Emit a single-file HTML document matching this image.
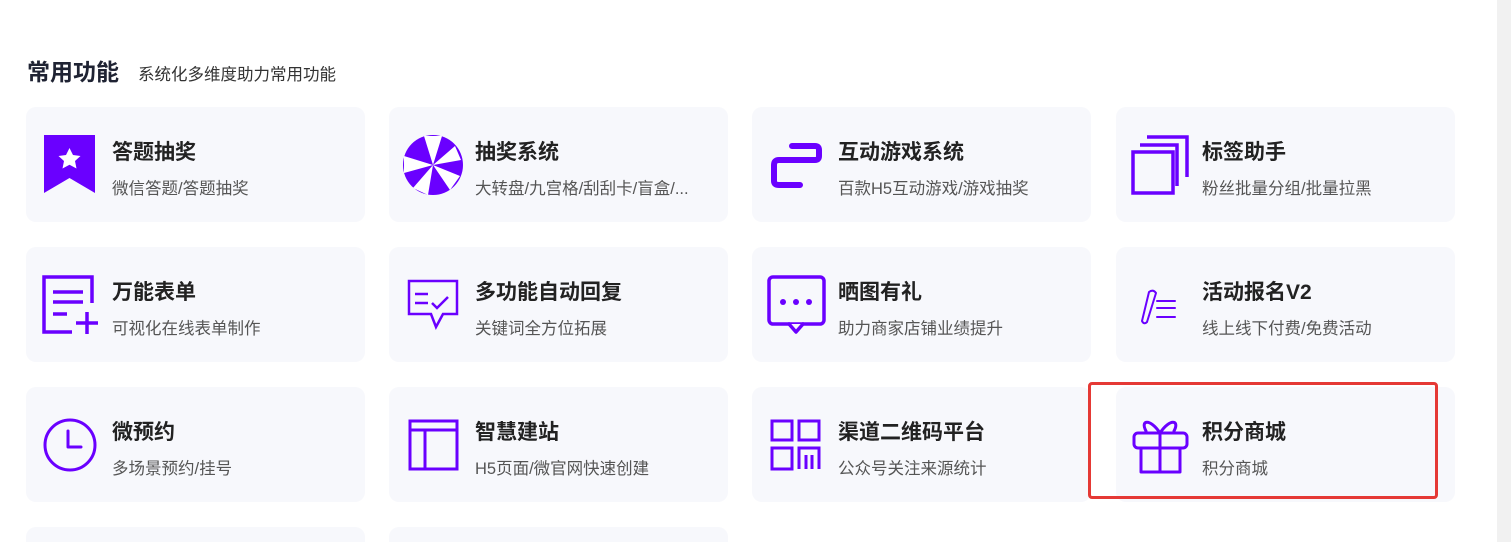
<!DOCTYPE html>
<html><head><meta charset="utf-8"><style>
html,body{margin:0;width:1511px;height:542px;overflow:hidden}
body{background:#fff;position:relative;font-family:"Liberation Sans","Noto Sans CJK SC",sans-serif}
.sb{position:absolute;left:1497px;top:0;width:14px;height:542px;background:#f1f1f1}
h1{position:absolute;left:27px;top:53px;margin:0;font-size:23px;font-weight:bold;color:#1f2333}
.st{position:absolute;left:138px;top:61px;font-size:16.5px;color:#333}
.c{position:absolute;width:339px;height:115px;background:#f7f8fc;border-radius:10px}
.t{position:absolute;left:86px;top:29px;font-size:21px;font-weight:bold;color:#222}
.s{position:absolute;left:86px;top:68px;font-size:16.5px;color:#555;white-space:nowrap}
.red{position:absolute;left:1088px;top:382px;width:344px;height:111px;border:3px solid #e53935;border-radius:4px}
svg.ic{position:absolute;left:0;top:0}
</style></head><body>
<div class="sb"></div>
<h1>常用功能</h1><div class="st">系统化多维度助力常用功能</div>

<div class="c" style="left:26px;top:107px"><div class="t">答题抽奖</div><div class="s">微信答题/答题抽奖</div></div>
<div class="c" style="left:389px;top:107px"><div class="t">抽奖系统</div><div class="s">大转盘/九宫格/刮刮卡/盲盒/...</div></div>
<div class="c" style="left:752px;top:107px"><div class="t">互动游戏系统</div><div class="s">百款H5互动游戏/游戏抽奖</div></div>
<div class="c" style="left:1116px;top:107px"><div class="t">标签助手</div><div class="s">粉丝批量分组/批量拉黑</div></div>
<div class="c" style="left:26px;top:247px"><div class="t">万能表单</div><div class="s">可视化在线表单制作</div></div>
<div class="c" style="left:389px;top:247px"><div class="t">多功能自动回复</div><div class="s">关键词全方位拓展</div></div>
<div class="c" style="left:752px;top:247px"><div class="t">晒图有礼</div><div class="s">助力商家店铺业绩提升</div></div>
<div class="c" style="left:1116px;top:247px"><div class="t">活动报名V2</div><div class="s">线上线下付费/免费活动</div></div>
<div class="c" style="left:26px;top:387px"><div class="t">微预约</div><div class="s">多场景预约/挂号</div></div>
<div class="c" style="left:389px;top:387px"><div class="t">智慧建站</div><div class="s">H5页面/微官网快速创建</div></div>
<div class="c" style="left:752px;top:387px"><div class="t">渠道二维码平台</div><div class="s">公众号关注来源统计</div></div>
<div class="c" style="left:1116px;top:387px"><div class="t">积分商城</div><div class="s">积分商城</div></div>
<div class="c" style="left:26px;top:527px;height:15px;border-radius:10px 10px 0 0"></div>
<div class="c" style="left:389px;top:527px;height:15px;border-radius:10px 10px 0 0"></div>

<svg class="ic" width="1511" height="542" viewBox="0 0 1511 542">
<g fill="#6a00ff">
<path d="M44 135H95V193L69.5 178L44 193Z"/>
<ellipse cx="433" cy="165" rx="30" ry="30"/>
<circle cx="783" cy="302" r="3"/><circle cx="796" cy="302" r="3"/><circle cx="809" cy="302" r="3"/>
</g>
<path d="M69.5 148l3.5 7 7.5 1-5.5 5 1.5 7.5-7-3.8-7 3.8 1.5-7.5-5.5-5 7.5-1z" fill="#fff"/>
<g fill="#fff"><path d="M433 165L424 136 442 136z"/><path d="M433 165L455 146 461 160z"/><path d="M433 165L460 176 450 190z"/><path d="M433 165L428 195 413 188z"/><path d="M433 165L404 173 404 156z"/></g>
<g fill="none" stroke="#6a00ff" stroke-linecap="round" stroke-linejoin="round">
<path stroke-width="6" d="M792 146H815Q819 146 819 150V156Q819 160 815 160H779Q774 160 774 165V181Q774 185 779 185H800"/>
<g stroke-width="3.5" stroke-linecap="butt" stroke-linejoin="miter">
<rect x="1133" y="152" width="40" height="41"/>
<path d="M1140 145H1177V186M1147 137H1187V177"/>
<path d="M72 332H44V277H92V303M53 292H83M53 302H83M53 314H67M87 312V334M76 323H98"/>
</g>
<g stroke-width="3.5"><rect x="769" y="277" width="55" height="47" rx="4"/></g>
<path stroke-width="3.5" fill="#f7f8fc" d="M789 324L796 332L803 324"/>
<g stroke-width="2.5" stroke-linecap="butt" stroke-linejoin="miter">
<path d="M409 281H457V314H443L436 327L431 314H409Z"/>
<path d="M415 294H428M415 303H428M432 303L437 308L448 297"/>
</g>
<g stroke-width="2"><path d="M1149 292Q1153 289 1156 293L1147 322Q1144 325 1142 321Z"/><path d="M1157 301H1175M1157 308H1175M1157 317H1175"/></g>
<circle cx="70" cy="445" r="25" stroke-width="3"/>
<path stroke-width="3" d="M68 431V447H81"/>
<g stroke-width="3" stroke-linejoin="miter" stroke-linecap="butt">
<rect x="410" y="421" width="47" height="48"/>
<path d="M410 430H457M425 430V469"/>
<rect x="772" y="421" width="20" height="19"/><rect x="799" y="421" width="20" height="19"/>
<rect x="772" y="448" width="20" height="21"/>
<path d="M799 469V448H819V469M806 455V469M812 455V469"/>
</g>
<g stroke-width="3">
<rect x="1134" y="433" width="53" height="15" rx="4"/>
<path d="M1141 448V472H1180V448M1160 433V472M1160 433C1150 418 1140 420 1146 431M1160 433C1170 418 1180 420 1174 431"/>
</g>
</g>
</svg>
<div class="red"></div>
</body></html>
